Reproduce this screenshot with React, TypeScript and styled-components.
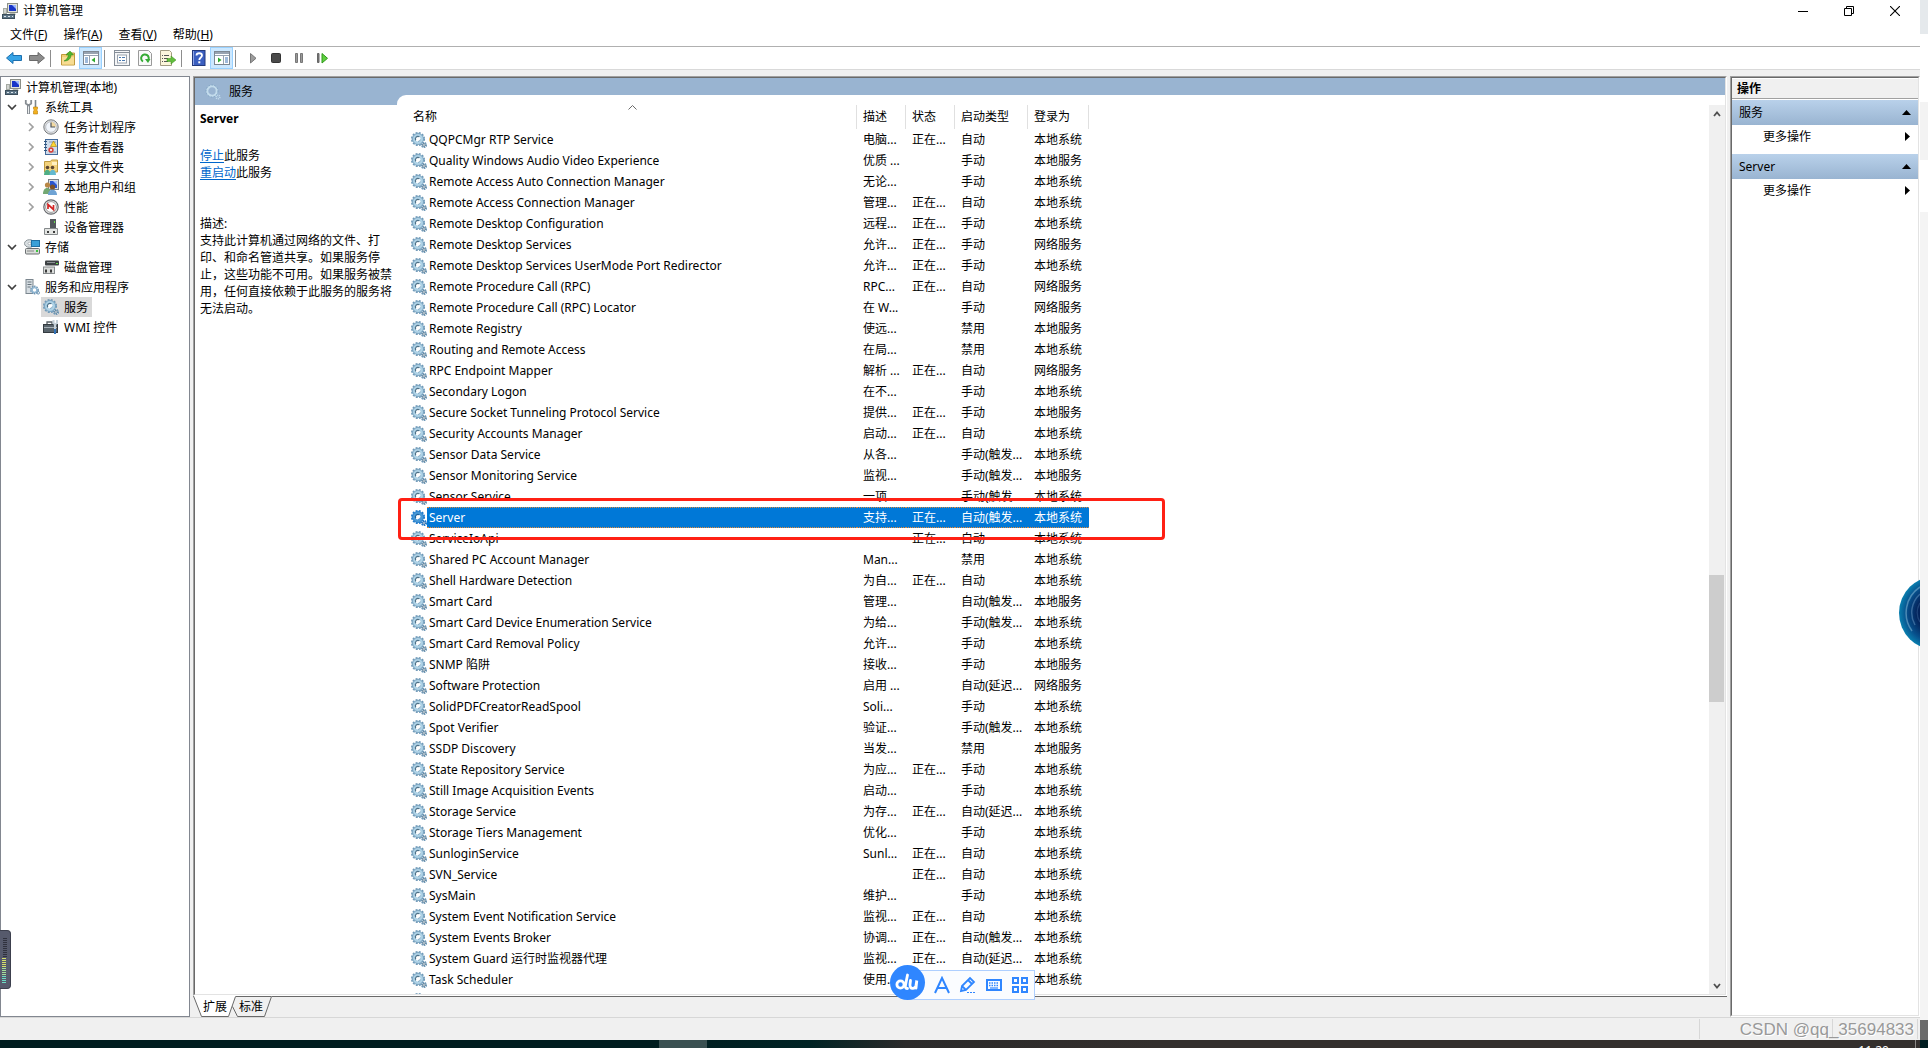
import React, { useState } from "react";
import styled, { createGlobalStyle, css } from "styled-components";

const fontStack = `"Noto Sans", "Noto Sans CJK SC", sans-serif`;

const GlobalStyle = createGlobalStyle`
  *, *::before, *::after { box-sizing: border-box; }
  html, body, #root { margin: 0; height: 100%; }
  body {
    font-family: ${fontStack};
    font-size: 12px;
    line-height: 17px;
    color: #000;
    background: #fff;
    overflow: hidden;
  }
  button {
    font: inherit;
    color: inherit;
    border: 0;
    margin: 0;
    padding: 0;
    background: none;
    text-align: left;
    white-space: nowrap;
  }
  ul { list-style: none; margin: 0; padding: 0; }
  p, h1, h2 { margin: 0; font-size: 12px; font-weight: 400; }
  svg { display: block; flex: none; }
`;

/* ---------- icons ---------- */

type IconName =
  | "computer" | "tools" | "clock" | "event" | "share" | "users" | "perf" | "device"
  | "storage" | "disk" | "server" | "gears" | "wmi"
  | "back" | "forward" | "folderUp" | "paneLeft" | "props" | "refresh" | "export"
  | "help" | "paneRight" | "play" | "stop" | "pause" | "step";

const Gears = ({ tone = "#6f99b8", fill = "#aed2e6", dark = "#4d7088" }) => (
  <>
    <circle cx="7" cy="7" r="6.1" fill="none" stroke={tone} strokeWidth="1.9" strokeDasharray="1.9 1.3" />
    <circle cx="7" cy="7" r="4.1" fill="#fff" stroke={fill} strokeWidth="3.2" />
    <circle cx="7" cy="7" r="5.5" fill="none" stroke={tone} strokeWidth="0.8" />
    <path d="M4.8 8.4A2.6 2.6 0 0 1 8.4 4.8" fill="none" stroke={dark} strokeWidth="1.2" />
    <path d="M9.4 7.4A2.5 2.5 0 0 1 7 9.500" fill="none" stroke={tone} strokeWidth="0.8" />
    <circle cx="13" cy="13" r="2.2" fill="#fff" stroke={tone} strokeWidth="1.8" strokeDasharray="1.4 0.6" />
    <circle cx="13" cy="13" r="1.3" fill="none" stroke={dark} strokeWidth="0.8" />
  </>
);

const Pane = ({ flip = false }) => (
  <g transform={flip ? "translate(16 0) scale(-1 1)" : undefined}>
    <rect x="0.5" y="1.5" width="15" height="13" fill="#fff" stroke="#7d8792" />
    <rect x="1" y="2" width="14" height="2" fill="#98a3b1" />
    <path d="M1 5.5h14M6.5 6v8" stroke="#98a3b1" />
    <path d="M2 8h3M2 10h3M2 12h3" stroke="#3f74b5" />
    <path d="M12 7.5v5L8.5 10z" fill="#2eaa2e" />
  </g>
);

const drawings: Record<IconName, React.ReactNode> = {
  computer: (
    <>
      <rect x="5.5" y="0.5" width="10" height="9" fill="#e0e3dc" stroke="#8b8f88" />
      <rect x="7" y="2" width="7" height="6" fill="#1835c8" />
      <path d="M10 2h4v4z" fill="#9ab6ff" />
      <path d="M8 10h5l1 2H7z" fill="#b8bcb4" />
      <rect x="1" y="5" width="4" height="6" fill="#a5aaa3" />
      <path d="M2 7h2M2 9h2" stroke="#fff" />
      <rect x="0.5" y="11.5" width="12" height="4" fill="#5e7688" stroke="#3c4e5b" />
      <path d="M2 13.5h2M6 13.5h2M10 13.5h1" stroke="#dce6ec" />
    </>
  ),
  tools: (
    <>
      <path d="M4.5 6v9" stroke="#878d93" strokeWidth="3" />
      <path d="M4.5 6v8.5" stroke="#eceff0" />
      <path d="M1.8 1v3.5l2.7 2 2.700-2V1" fill="none" stroke="#878d93" strokeWidth="1.800" />
      <path d="M11.5 1v7" stroke="#7d858b" strokeWidth="1.6" />
      <path d="M9.5 8h4v2l-1 1 1 1v3h-4v-3l1-1-1-1z" fill="#f2b01e" stroke="#b87d08" strokeWidth="0.6" />
    </>
  ),
  clock: (
    <>
      <circle cx="8" cy="8" r="7.2" fill="#dedede" stroke="#777b80" />
      <circle cx="8" cy="8" r="5.3" fill="#f1f5fb" stroke="#aab0b8" strokeWidth="0.7" />
      <path d="M8 8V3a5 5 0 0 1 5 5z" fill="#f2d9a2" />
      <path d="M8 3.5V8h4" fill="none" stroke="#4b535c" strokeWidth="1.2" />
    </>
  ),
  event: (
    <>
      <rect x="2.5" y="0.5" width="12" height="15" fill="#cfdceb" stroke="#436a9b" />
      <path d="M1 2.5h3M1 5.5h3M1 8.5h3M1 11.5h3" stroke="#31577f" />
      <path d="M6 3h7M6 13h7" stroke="#8397b0" />
      <path d="M10.5 2l3 5.5h-6z" fill="#ffd633" stroke="#a78200" strokeWidth="0.6" />
      <circle cx="8" cy="11" r="2.7" fill="#d8433c" />
      <path d="M7 10l2 2M9 10l-2 2" stroke="#fff" strokeWidth="0.8" />
    </>
  ),
  share: (
    <>
      <path d="M1.5 2.5h6l1-1.500h6v12h-13z" fill="#f3d27c" stroke="#bf9a40" />
      <path d="M9 3h5v3H9z" fill="#fff0c2" />
      <circle cx="4.5" cy="8.5" r="1.8" fill="#5d4630" />
      <circle cx="9.500" cy="8.5" r="1.8" fill="#5d4630" />
      <path d="M1 16c0-7 6.500-7 6.500 0z" fill="#4fae84" />
      <path d="M6.500 16c0-7 6.500-7 6.500 0z" fill="#63b9cf" />
    </>
  ),
  users: (
    <>
      <rect x="5.5" y="0.5" width="10" height="10" fill="#dbe0e4" stroke="#7a8087" />
      <rect x="7" y="2" width="7" height="7" fill="#2a55cf" />
      <path d="M10 2h4v4z" fill="#a9c3ff" />
      <circle cx="4.5" cy="6" r="2.6" fill="#b98746" />
      <circle cx="9.5" cy="8" r="2.6" fill="#7d5228" />
      <path d="M0 15c0-8 8-8 8 0z" fill="#73a873" />
      <path d="M5 16c0-7 9-7 9 0z" fill="#6fa3d4" />
    </>
  ),
  perf: (
    <>
      <circle cx="8" cy="8" r="7.2" fill="#ececec" stroke="#66696d" strokeWidth="1.2" />
      <circle cx="8" cy="8" r="5.4" fill="#fff" stroke="#777" strokeWidth="0.7" />
      <path d="M5 10V5.500l5.500 5V6" fill="none" stroke="#d32626" strokeWidth="1.7" />
    </>
  ),
  device: (
    <>
      <rect x="7" y="0" width="6" height="9" fill="#53585c" />
      <path d="M11.5 2v2" stroke="#69de4e" />
      <path d="M1.5 9.5h13v6h-13z" fill="#e4e6e4" stroke="#85898b" />
      <rect x="4" y="12" width="2" height="2" fill="#3b3b3b" />
      <rect x="10" y="12" width="2" height="2" fill="#3b3b3b" />
    </>
  ),
  storage: (
    <>
      <ellipse cx="5.5" cy="4.5" rx="5" ry="3.8" fill="#d9dfe2" stroke="#8b9499" />
      <ellipse cx="5.5" cy="4.5" rx="1.5" ry="1.2" fill="#fff" stroke="#8b9499" strokeWidth="0.6" />
      <rect x="7.5" y="1.5" width="8" height="6" fill="#3aa0d8" stroke="#1f6fa2" />
      <rect x="1.5" y="9.5" width="14" height="5.5" rx="1" fill="#d9dcd9" stroke="#6c7073" />
      <path d="M3 12h7" stroke="#888" />
      <rect x="12" y="11" width="2" height="2" fill="#3fc33f" />
    </>
  ),
  disk: (
    <>
      <rect x="2" y="1.5" width="14" height="5" rx="1" fill="#3d4144" />
      <path d="M4 3.5h8" stroke="#8c9195" />
      <rect x="13" y="4" width="2" height="1" fill="#69de4e" />
      <rect x="0.5" y="8" width="11" height="6.5" fill="#dadcda" stroke="#85898b" />
      <rect x="2" y="10.5" width="2" height="3" fill="#3b3b3b" />
      <rect x="7" y="10.5" width="2" height="3" fill="#3b3b3b" />
    </>
  ),
  server: (
    <>
      <rect x="2" y="0.5" width="7" height="14" fill="#d6dde2" stroke="#7b868e" />
      <path d="M3.5 3h4M3.5 5.5h4M3.5 8h3" stroke="#68747d" />
      <circle cx="10.5" cy="11" r="3.6" fill="none" stroke="#6d95b4" strokeWidth="1.6" strokeDasharray="1.5 0.8" />
      <circle cx="10.5" cy="11" r="2.4" fill="#fff" stroke="#8fb6d2" strokeWidth="1.4" />
      <circle cx="14.2" cy="13.8" r="1.3" fill="none" stroke="#6d95b4" />
    </>
  ),
  gears: <Gears />,
  wmi: (
    <>
      <path d="M4 5V3h5v2" fill="none" stroke="#555d63" strokeWidth="1.3" />
      <rect x="0.5" y="5.5" width="14" height="8" fill="#59646c" stroke="#343b40" />
      <path d="M1 8.5h13" stroke="#a7b1b8" />
      <path d="M10.5 1v3l1.500 1.500L14 4V1M12 6v9" fill="none" stroke="#c4d0d8" strokeWidth="2" />
      <path d="M12 10v5" stroke="#3473b7" strokeWidth="2" />
    </>
  ),
  back: <path d="M0.5 8L7 2.5v3h8.5v5H7v3z" fill="#36a3e6" stroke="#1c6fae" strokeLinejoin="round" />,
  forward: <path d="M15.5 8L9 2.5v3H0.5v5H9v3z" fill="#8d8d8d" stroke="#6a6a6a" strokeLinejoin="round" />,
  folderUp: (
    <>
      <path d="M1.5 4.5h5l1-1.500h7v12h-13z" fill="#f0cd72" stroke="#c09a3c" />
      <path d="M2 7h12v7.5H2z" fill="#f7dc92" />
      <path d="M4 11c2-1 4-3 4.500-6H6l4-4 3.500 4H11c0 4-3 6-7 6z" fill="#4fb52f" stroke="#2e8518" strokeWidth="0.5" />
    </>
  ),
  paneLeft: <Pane />,
  paneRight: <Pane flip />,
  props: (
    <>
      <rect x="0.5" y="0.5" width="15" height="15" fill="#f5f6f8" stroke="#868e98" />
      <path d="M1 2.5h14" stroke="#868e98" />
      <rect x="3.5" y="5" width="9" height="8" fill="#fff" stroke="#9aa3ae" />
      <path d="M5 7.5h2M8 7.5h3M5 10.5h2M8 10.5h3" stroke="#4a7ab0" />
    </>
  ),
  refresh: (
    <>
      <path d="M1.5 0.5h10l3 3v12h-13z" fill="#fafafa" stroke="#9a9a9a" />
      <path d="M6 11.5A3.8 3.8 0 1 1 11 10.5" fill="none" stroke="#35ab35" strokeWidth="2" />
      <path d="M8 9h5.5L11 13z" fill="#35ab35" />
    </>
  ),
  export: (
    <>
      <path d="M0.5 0.5h9l2 2v13h-11z" fill="#fdf6dc" stroke="#a39c83" />
      <path d="M2 5.5h1M4 5.5h5M2 8.5h1M4 8.5h4M2 11.5h1M4 11.5h4" stroke="#555" />
      <path d="M7 8.5h4V6l5 4-5 4v-2.500H7z" fill="#62bd3d" stroke="#3a8f1d" strokeWidth="0.5" />
    </>
  ),
  help: (
    <>
      <rect x="1.5" y="0.5" width="12.5" height="15" fill="#3b5fc0" stroke="#23397c" />
      <path d="M2.5 1v14" stroke="#8ea5e6" />
      <path d="M5.5 5.5c0-3 5.500-3 5.500 0 0 2-2.700 2-2.700 4.500" fill="none" stroke="#fff" strokeWidth="1.8" />
      <rect x="7.3" y="11.3" width="2" height="2" fill="#fff" />
    </>
  ),
  play: <path d="M5.5 3.5V13l5.500-4.700z" fill="#9c9c9c" stroke="#777" />,
  stop: <rect x="3.5" y="3.5" width="9" height="9" rx="1" fill="#4a4a4a" stroke="#333" />,
  pause: <path d="M4.5 3.5h2v9h-2zM9.5 3.5h2v9h-2z" fill="#9a9a9a" stroke="#777" />,
  step: (
    <>
      <path d="M3.5 3.5H5v9H3.500z" fill="#777" stroke="#666" />
      <path d="M8 3.5V13l5.500-4.700z" fill="#5fcf3f" stroke="#2f9a1a" />
    </>
  ),
};

const Icon = ({ name }: { name: IconName }) => (
  <svg width="16" height="16" viewBox="0 0 16 16" aria-hidden="true">{drawings[name]}</svg>
);

const ServiceIcon = ({ active }: { active: boolean }) => (
  <svg width="16" height="16" viewBox="0 0 16 16" aria-hidden="true">
    {active ? <Gears tone="#1f7acb" fill="#4a9ad6" dark="#1b5f9e" /> : <Gears />}
  </svg>
);

const Chevron = ({ open = false }) => (
  <svg width="10" height="10" viewBox="0 0 10 10" aria-hidden="true">
    <path
      d={open ? "M1 3l4 4 4-4" : "M3 1l4 4-4 4"}
      fill="none"
      stroke={open ? "#404040" : "#a0a0a0"}
      strokeWidth="1.7"
    />
  </svg>
);

/* ---------- desktop frame ---------- */

const Screen = styled.div`
  position: relative;
  display: grid;
  grid-template-columns: minmax(0, 1fr) 8px;
  grid-template-rows: minmax(0, 1fr) 8px;
  height: 100vh;
  overflow: hidden;
`;

const Window = styled.div`
  display: flex;
  flex-direction: column;
  min-height: 0;
  background: #f0f0f0;
`;

const DesktopStrip = styled.div`
  display: flex;
  flex-direction: column;
`;

const StripBlock = styled.div<{ $h?: number; $tone: string }>`
  flex: ${(p) => (p.$h ? `0 0 ${p.$h}px` : "1")};
  background: ${(p) => p.$tone};
`;

const TitleBar = styled.header`
  display: flex;
  justify-content: space-between;
  height: 23px;
  background: #fff;
`;

const AppTitle = styled.h1`
  display: flex;
  align-items: center;
  gap: 5px;
  padding: 0 0 2px 2px;
`;

const WindowButtons = styled.div`
  display: flex;
  height: 21px;
  padding-right: 2px;
`;

const WindowButton = styled.button`
  display: flex;
  align-items: center;
  justify-content: center;
  width: 46px;
`;

const MenuBar = styled.nav`
  display: flex;
  height: 24px;
  padding-left: 2px;
  background: #fff;
  border-bottom: 1px solid #b0b0b0;
`;

const MenuButton = styled.button`
  padding: 0 8px;
`;

const Toolbar = styled.div`
  display: flex;
  height: 23px;
  padding-left: 2px;
  background: #fff;
  border-bottom: 1px solid #d9d9d9;
`;

const ToolButton = styled.button<{ $on?: boolean }>`
  display: flex;
  align-items: center;
  justify-content: center;
  width: 23px;
  ${(p) => p.$on && css`
    background: #cce8ff;
    border: 1px solid #99d1ff;
  `}
`;

const ToolDivider = styled.span`
  width: 1px;
  margin: 3px 5px 2px 2px;
  background: #8d8d8d;
`;

const Workspace = styled.main`
  display: grid;
  grid-template-columns: 190px minmax(0, 1fr) 190px;
  gap: 3px;
  flex: 1;
  min-height: 0;
  padding-top: 6px;
`;

/* ---------- tree ---------- */

const TreePane = styled.nav`
  background: #fff;
  border: 1px solid #828790;
`;

const TreeRow = styled.div<{ $depth: number }>`
  display: flex;
  height: 20px;
  padding-left: ${(p) => [2, 3, 22][p.$depth]}px;
`;

const Twisty = styled.button`
  display: flex;
  align-items: center;
  justify-content: center;
  width: 18px;
  padding-right: 2px;
`;

const TreeLabel = styled.button<{ $selected?: boolean }>`
  display: flex;
  align-items: center;
  gap: 5px;
  padding: 0 4px 0 2px;
  background: ${(p) => (p.$selected ? "#d9d9d9" : "none")};
`;

/* ---------- centre ---------- */

const CentrePane = styled.section`
  display: flex;
  flex-direction: column;
  min-width: 0;
  min-height: 0;
`;

const Bezel = styled.div`
  display: flex;
  flex: 1;
  min-height: 0;
  border: 1px solid;
  border-color: #a0a0a0 #fff #fff #a0a0a0;
`;

const BezelInner = styled.div<{ $column?: boolean }>`
  display: flex;
  flex: 1;
  flex-direction: ${(p) => (p.$column ? "column" : "row")};
  min-width: 0;
  background: ${(p) => (p.$column ? "#fff" : "#99b4d1")};
  border: 1px solid;
  border-color: #696969 #e3e3e3 #e3e3e3 #696969;
`;

const DetailColumn = styled.div`
  display: flex;
  flex-direction: column;
  width: 202px;
`;

const PaneTitle = styled.h2`
  display: flex;
  align-items: center;
  gap: 8px;
  height: 27px;
  padding-left: 10px;
`;

const Detail = styled.div`
  flex: 1;
  padding: 5px 2px 0 5px;
  background: #fff;
`;

const DetailName = styled.p`
  font-weight: 700;
`;

const DetailBlock = styled.div<{ $space: number }>`
  margin-top: ${(p) => p.$space}px;
`;

const ActionLink = styled.a`
  color: #0066cc;
  text-decoration: underline;
  text-underline-offset: 2px;
`;

const ListCard = styled.div`
  display: flex;
  flex: 1;
  min-width: 0;
  margin-top: 17px;
  padding-top: 10px;
  background: #fff;
  border-top-left-radius: 9px;
`;

const ListViewport = styled.div`
  flex: 1;
  min-width: 0;
  overflow: hidden;
  padding-left: 11px;
`;

const ServiceTable = styled.table`
  width: 681px;
  table-layout: fixed;
  border-collapse: separate;
  border-spacing: 0;
`;

const Column = styled.col<{ $w: number }>`
  width: ${(p) => p.$w}px;
`;

const HeadCell = styled.th`
  position: relative;
  height: 24px;
  padding: 0 0 2px 6px;
  border-right: 1px solid #e0e0e0;
  font-weight: 400;
  text-align: left;
  white-space: nowrap;
  &:first-child { padding-left: 5px; }
`;

const SortMark = styled.svg`
  position: absolute;
  top: 0;
  left: calc(50% - 4px);
`;

const BodyCell = styled.td`
  height: 21px;
  padding: 0;
  white-space: nowrap;
`;

const CellText = styled.div<{ $selected: boolean }>`
  flex: 1;
  height: 21px;
  padding-left: 6px;
  line-height: 19px;
  border: solid transparent;
  border-width: 1px 0;
  overflow: hidden;
  ${(p) => p.$selected && css`
    color: #fff;
    background: #0078d7;
    border: dotted #e08a3c;
    border-width: 1px 0;
  `}
`;

const NameCell = styled.div`
  display: flex;
  align-items: center;
  padding-left: 3px;
  ${CellText} { padding-left: 2px; }
`;

const ScrollTrack = styled.div`
  display: flex;
  flex-direction: column;
  width: 16px;
  padding-right: 1px;
  background: #f0f0f0;
`;

const ScrollArrow = styled.button`
  display: flex;
  align-items: center;
  justify-content: center;
  height: 17px;
`;

const ScrollPart = styled.div<{ $share: number; $thumb?: boolean }>`
  flex: ${(p) => p.$share} 1 0;
  background: ${(p) => (p.$thumb ? "#cdcdcd" : "none")};
`;

const TabStrip = styled.div`
  display: flex;
  height: 21px;
`;

const Tab = styled.button<{ $active: boolean; $w: number }>`
  position: relative;
  width: ${(p) => p.$w}px;
  padding-left: ${(p) => (p.$active ? 10 : 5)}px;
  z-index: ${(p) => (p.$active ? 1 : 0)};
  svg { position: absolute; top: 0; left: 0; z-index: -1; overflow: visible; }
`;

const TabFill = styled.span`
  flex: 1;
  border-top: 1px solid #696969;
`;

/* ---------- actions ---------- */

const ActionsHeading = styled.h2`
  height: 21px;
  margin-bottom: 1px;
  padding: 1px 0 0 5px;
  font-weight: 700;
  background: #f0f0f0;
  border-top: 1px solid #fff;
  border-bottom: 1px solid #a0a0a0;
`;

const ActionGroup = styled.section`
  padding-bottom: 6px;
`;

const GroupHeader = styled.button`
  display: flex;
  align-items: center;
  justify-content: space-between;
  width: 100%;
  height: 25px;
  padding: 0 7px;
  background: linear-gradient(#b9d1ea, #99b4d1);
`;

const ActionItem = styled.button`
  display: flex;
  align-items: center;
  justify-content: space-between;
  width: 100%;
  height: 23px;
  padding: 0 8px 0 31px;
`;

/* ---------- bottom ---------- */

const StatusBar = styled.footer`
  display: flex;
  justify-content: flex-end;
  height: 23px;
  padding-top: 1px;
  border-top: 1px solid #d7d7d7;
`;

const StatusCell = styled.div<{ $w: number }>`
  width: ${(p) => p.$w}px;
  margin-bottom: 1px;
  border-left: 1px solid #d7d7d7;
`;

const Watermark = styled.span`
  position: absolute;
  right: 14px;
  bottom: 8px;
  font: 17px/20px "Liberation Sans", sans-serif;
  color: #999;
  text-shadow: 1px 1px 0 #fff;
`;

const Taskbar = styled.div`
  position: relative;
  display: flex;
  grid-column: 1 / -1;
  overflow: hidden;
  background: linear-gradient(90deg, #001d1f 0 34%, #002324 42%, #2b2a2a 47%, #332f2d 60%);
`;

const TaskButton = styled.button`
  width: 48px;
  margin-left: 659px;
  background: #3a5051;
`;

const Clock = styled.time`
  margin-left: auto;
  padding: 2px 26px 0 0;
  color: #fff;
  border-right: 1px solid #8b8886;
`;

const TaskEnd = styled.span`
  width: 12px;
  border-right: 8px solid #001d20;
`;

/* ---------- overlays ---------- */

const Highlight = styled.div`
  position: absolute;
  left: 398px;
  top: 498px;
  width: 767px;
  height: 42px;
  border: 3px solid #ff2014;
  border-radius: 4px;
  pointer-events: none;
`;

const InputBar = styled.div`
  position: absolute;
  left: 890px;
  top: 965px;
  display: flex;
  align-items: center;
`;

const InputLogo = styled.button`
  z-index: 1;
  width: 35px;
  height: 35px;
  border-radius: 50%;
  background: #2f86ff;
`;

const InputTools = styled.div`
  display: flex;
  align-items: center;
  gap: 8px;
  height: 30px;
  margin: 5px 0 0 -18px;
  padding: 0 5px 0 25px;
  background: #fafcff;
  border: 1px solid #aecfff;
`;

const InputTool = styled.button`
  width: 18px;
  height: 18px;
`;

const Meter = styled.div`
  position: absolute;
  left: 0;
  top: 930px;
  width: 11px;
  height: 59px;
  padding: 7px 0 0 2px;
  background: #565a6c;
  border: 1px solid #3c3f4d;
  border-left: 0;
  border-radius: 0 4px 4px 0;
`;

const Ball = styled.div`
  position: absolute;
  right: 8px;
  top: 578px;
  width: 22px;
  height: 70px;
`;

/* ---------- data ---------- */

type Node = { label: string; icon: IconName; depth: number; open?: boolean };

const tree: Node[] = [
  { label: "计算机管理(本地)", icon: "computer", depth: 0 },
  { label: "系统工具", icon: "tools", depth: 1, open: true },
  { label: "任务计划程序", icon: "clock", depth: 2, open: false },
  { label: "事件查看器", icon: "event", depth: 2, open: false },
  { label: "共享文件夹", icon: "share", depth: 2, open: false },
  { label: "本地用户和组", icon: "users", depth: 2, open: false },
  { label: "性能", icon: "perf", depth: 2, open: false },
  { label: "设备管理器", icon: "device", depth: 2 },
  { label: "存储", icon: "storage", depth: 1, open: true },
  { label: "磁盘管理", icon: "disk", depth: 2 },
  { label: "服务和应用程序", icon: "server", depth: 1, open: true },
  { label: "服务", icon: "gears", depth: 2 },
  { label: "WMI 控件", icon: "wmi", depth: 2 },
];

const RUN = "正在...";
const SYS = "本地系统";
const LOC = "本地服务";
const NET = "网络服务";
const TRIG = "手动(触发...";
const ATRIG = "自动(触发...";
const DELAY = "自动(延迟...";

const services: string[][] = [
  ["QQPCMgr RTP Service", "电脑...", RUN, "自动", SYS],
  ["Quality Windows Audio Video Experience", "优质 ...", "", "手动", LOC],
  ["Remote Access Auto Connection Manager", "无论...", "", "手动", SYS],
  ["Remote Access Connection Manager", "管理...", RUN, "自动", SYS],
  ["Remote Desktop Configuration", "远程...", RUN, "手动", SYS],
  ["Remote Desktop Services", "允许...", RUN, "手动", NET],
  ["Remote Desktop Services UserMode Port Redirector", "允许...", RUN, "手动", SYS],
  ["Remote Procedure Call (RPC)", "RPC...", RUN, "自动", NET],
  ["Remote Procedure Call (RPC) Locator", "在 W...", "", "手动", NET],
  ["Remote Registry", "使远...", "", "禁用", LOC],
  ["Routing and Remote Access", "在局...", "", "禁用", SYS],
  ["RPC Endpoint Mapper", "解析 ...", RUN, "自动", NET],
  ["Secondary Logon", "在不...", "", "手动", SYS],
  ["Secure Socket Tunneling Protocol Service", "提供...", RUN, "手动", LOC],
  ["Security Accounts Manager", "启动...", RUN, "自动", SYS],
  ["Sensor Data Service", "从各...", "", TRIG, SYS],
  ["Sensor Monitoring Service", "监视...", "", TRIG, LOC],
  ["Sensor Service", "一项...", "", TRIG, SYS],
  ["Server", "支持...", RUN, ATRIG, SYS],
  ["ServiceIoApi", "", RUN, "自动", SYS],
  ["Shared PC Account Manager", "Man...", "", "禁用", SYS],
  ["Shell Hardware Detection", "为自...", RUN, "自动", SYS],
  ["Smart Card", "管理...", "", ATRIG, LOC],
  ["Smart Card Device Enumeration Service", "为给...", "", TRIG, SYS],
  ["Smart Card Removal Policy", "允许...", "", "手动", SYS],
  ["SNMP 陷阱", "接收...", "", "手动", LOC],
  ["Software Protection", "启用 ...", "", DELAY, NET],
  ["SolidPDFCreatorReadSpool", "Soli...", "", "手动", SYS],
  ["Spot Verifier", "验证...", "", TRIG, SYS],
  ["SSDP Discovery", "当发...", "", "禁用", LOC],
  ["State Repository Service", "为应...", RUN, "手动", SYS],
  ["Still Image Acquisition Events", "启动...", "", "手动", SYS],
  ["Storage Service", "为存...", RUN, DELAY, SYS],
  ["Storage Tiers Management", "优化...", "", "手动", SYS],
  ["SunloginService", "Sunl...", RUN, "自动", SYS],
  ["SVN_Service", "", RUN, "自动", SYS],
  ["SysMain", "维护...", "", "手动", SYS],
  ["System Event Notification Service", "监视...", RUN, "自动", SYS],
  ["System Events Broker", "协调...", RUN, ATRIG, SYS],
  ["System Guard 运行时监视器代理", "监视...", RUN, DELAY, SYS],
  ["Task Scheduler", "使用...", RUN, "自动", SYS],
  ["", "", "", "", ""],
];

const menus = [["文件", "F"], ["操作", "A"], ["查看", "V"], ["帮助", "H"]];

const tools: { icon?: IconName; label?: string; on?: boolean }[] = [
  { icon: "back", label: "后退" },
  { icon: "forward", label: "前进" },
  {},
  { icon: "folderUp", label: "向上一级" },
  { icon: "paneLeft", label: "显示/隐藏控制台树", on: true },
  {},
  { icon: "props", label: "属性" },
  { icon: "refresh", label: "刷新" },
  { icon: "export", label: "导出列表" },
  {},
  { icon: "help", label: "帮助" },
  { icon: "paneRight", label: "显示/隐藏操作窗格", on: true },
  {},
  { icon: "play", label: "启动服务" },
  { icon: "stop", label: "停止服务" },
  { icon: "pause", label: "暂停服务" },
  { icon: "step", label: "重新启动服务" },
];

/* ---------- parts ---------- */

const Caption = () => (
  <WindowButtons>
    <WindowButton aria-label="最小化">
      <svg width="10" height="10" viewBox="0 0 10 10"><path d="M0 5.5h10" stroke="#000" /></svg>
    </WindowButton>
    <WindowButton aria-label="还原">
      <svg width="10" height="10" viewBox="0 0 10 10">
        <path d="M0.5 2.5h7v7h-7zM2.5 2.5v-2h7v7h-2" fill="none" stroke="#000" />
      </svg>
    </WindowButton>
    <WindowButton aria-label="关闭">
      <svg width="10" height="10" viewBox="0 0 10 10"><path d="M0 0l10 10M10 0L0 10" stroke="#000" strokeWidth="1.1" /></svg>
    </WindowButton>
  </WindowButtons>
);

const ServiceList = ({ selected, onSelect }: { selected: string; onSelect: (s: string) => void }) => (
  <ServiceTable>
    <colgroup>
      {[449, 49, 49, 73, 61].map((w, i) => <Column key={i} $w={w} />)}
    </colgroup>
    <thead>
      <tr>
        <HeadCell>
          名称
          <SortMark width="9" height="5" viewBox="0 0 9 5" aria-hidden="true">
            <path d="M0.5 4.5l4-4 4 4" fill="none" stroke="#6a6a6a" />
          </SortMark>
        </HeadCell>
        {["描述", "状态", "启动类型", "登录为"].map((h) => <HeadCell key={h}>{h}</HeadCell>)}
      </tr>
    </thead>
    <tbody>
      {services.map(([name, ...rest], r) => {
        const active = name === selected;
        return (
          <tr key={r} onClick={() => name && onSelect(name)}>
            <BodyCell>
              <NameCell>
                <ServiceIcon active={active} />
                <CellText $selected={active}>{name}</CellText>
              </NameCell>
            </BodyCell>
            {rest.map((text, i) => (
              <BodyCell key={i}><CellText $selected={active}>{text}</CellText></BodyCell>
            ))}
          </tr>
        );
      })}
    </tbody>
  </ServiceTable>
);

const ScrollBar = () => (
  <ScrollTrack>
    <ScrollArrow aria-label="向上滚动">
      <svg width="8" height="6" viewBox="0 0 8 6"><path d="M1 5l3-3.500L7 5" fill="none" stroke="#505050" strokeWidth="1.8" /></svg>
    </ScrollArrow>
    <ScrollPart $share={454} />
    <ScrollPart $share={127} $thumb />
    <ScrollPart $share={275} />
    <ScrollArrow aria-label="向下滚动">
      <svg width="8" height="6" viewBox="0 0 8 6"><path d="M1 1l3 3.500L7 1" fill="none" stroke="#505050" strokeWidth="1.8" /></svg>
    </ScrollArrow>
  </ScrollTrack>
);

const InputMethodBar = () => (
  <InputBar>
    <InputLogo aria-label="输入法">
      <svg width="35" height="35" viewBox="0 0 35 35">
        <g fill="none" stroke="#fff" strokeWidth="2.8" strokeLinecap="round">
          <circle cx="10.5" cy="19.5" r="3.6" />
          <path d="M17.5 10l-2 10c-.5 3 .5 3.500 2 3.500" />
          <path d="M20.5 15.5l-.5 4c-.5 5 5 5 6 1l.8-5-.8 7.500" />
        </g>
      </svg>
    </InputLogo>
    <InputTools>
      <InputTool aria-label="中英文切换">
        <svg width="18" height="18" viewBox="0 0 18 18"><path d="M2 17L9 2l7 15M5 12h8" fill="none" stroke="#2f86ff" strokeWidth="2" /></svg>
      </InputTool>
      <InputTool aria-label="手写">
        <svg width="18" height="18" viewBox="0 0 18 18">
          <path d="M2 15l1-5 8-8 4 4-8 8zM9 4l4 4M3 10l4 4" fill="none" stroke="#2f86ff" strokeWidth="1.8" />
          <path d="M8 16.5h2M11 16.5h2M14 16.5h2" stroke="#2f86ff" />
        </svg>
      </InputTool>
      <InputTool aria-label="软键盘">
        <svg width="18" height="18" viewBox="0 0 18 18">
          <rect x="2" y="4" width="14" height="10" fill="none" stroke="#2f86ff" strokeWidth="2" />
          <path d="M4 7h10M4 9.500h10" stroke="#2f86ff" strokeWidth="1.5" strokeDasharray="1.5 1" />
          <path d="M5 12h8" stroke="#2f86ff" strokeWidth="1.2" />
        </svg>
      </InputTool>
      <InputTool aria-label="工具箱">
        <svg width="18" height="18" viewBox="0 0 18 18">
          <path d="M2 2h5v5H2zM11 2h5v5h-5zM2 11h5v5H2zM11 11h5v5h-5z" fill="none" stroke="#2f86ff" strokeWidth="2" />
        </svg>
      </InputTool>
    </InputTools>
  </InputBar>
);

const LevelMeter = () => (
  <Meter>
    <svg width="5" height="46" viewBox="0 0 5 46">
      {Array.from({ length: 23 }, (_, i) => (
        <rect
          key={i}
          x={i < 10 ? 1 : 0}
          y={i * 2}
          width="4"
          height="1"
          fill={i < 10 ? "#30323e" : i < 15 ? "#d6e06a" : i < 19 ? "#a4e09a" : "#6cdcc4"}
        />
      ))}
    </svg>
  </Meter>
);

const FloatingBall = () => (
  <Ball>
    <svg width="22" height="70" viewBox="0 0 22 70">
      <defs>
        <radialGradient id="ball" gradientUnits="userSpaceOnUse" cx="38" cy="35" r="38">
          <stop offset="0.5" stopColor="#04245c" />
          <stop offset="0.78" stopColor="#07508c" />
          <stop offset="1" stopColor="#0a86b4" />
        </radialGradient>
      </defs>
      <circle cx="38" cy="35" r="37" fill="url(#ball)" />
      <g fill="none" strokeWidth="1.5">
        <path d="M22 9A31 31 0 0 0 14 53" stroke="#4b8ab5" />
        <path d="M22 16A25 25 0 0 0 17 47" stroke="#37699c" />
        <path d="M22 25A18 18 0 0 0 22 44" stroke="#1d4379" />
      </g>
    </svg>
  </Ball>
);

export default function App() {
  const [node, setNode] = useState("服务");
  const [service, setService] = useState("Server");

  return (
    <>
      <GlobalStyle />
      <Screen>
        <Window>
          <TitleBar>
            <AppTitle><Icon name="computer" />计算机管理</AppTitle>
            <Caption />
          </TitleBar>
          <MenuBar>
            {menus.map(([label, key]) => (
              <MenuButton key={key}>{label}(<u>{key}</u>)</MenuButton>
            ))}
          </MenuBar>
          <Toolbar>
            {tools.map((t, i) => t.icon
              ? <ToolButton key={i} $on={t.on} aria-label={t.label}><Icon name={t.icon} /></ToolButton>
              : <ToolDivider key={i} />)}
          </Toolbar>

          <Workspace>
            <TreePane>
              <ul>
                {tree.map((n) => (
                  <li key={n.label}>
                    <TreeRow $depth={n.depth}>
                      {n.depth > 0 && (
                        <Twisty aria-label={n.label} disabled={n.open === undefined}>
                          {n.open !== undefined && <Chevron open={n.open} />}
                        </Twisty>
                      )}
                      <TreeLabel $selected={n.label === node} onClick={() => setNode(n.label)}>
                        <Icon name={n.icon} />{n.label}
                      </TreeLabel>
                    </TreeRow>
                  </li>
                ))}
              </ul>
            </TreePane>

            <CentrePane>
              <Bezel>
                <BezelInner>
                  <DetailColumn>
                    <PaneTitle>
                      <svg width="16" height="16" viewBox="0 0 16 16" aria-hidden="true">
                        <circle cx="7" cy="7" r="4.8" fill="none" stroke="#c3dcec" strokeWidth="2.2" />
                        <circle cx="7" cy="7" r="6" fill="none" stroke="#7fa3c2" strokeDasharray="1.5 1.5" />
                        <circle cx="13" cy="13" r="1.8" fill="none" stroke="#c3dcec" strokeWidth="1.6" strokeDasharray="1 0.7" />
                      </svg>
                      服务
                    </PaneTitle>
                    <Detail>
                      <DetailName>Server</DetailName>
                      <DetailBlock $space={20}>
                        <p><ActionLink href="#stop">停止</ActionLink>此服务</p>
                        <p><ActionLink href="#restart">重启动</ActionLink>此服务</p>
                      </DetailBlock>
                      <DetailBlock $space={34}>
                        <p>描述:</p>
                        <p>支持此计算机通过网络的文件、打印、和命名管道共享。如果服务停止，这些功能不可用。如果服务被禁用，任何直接依赖于此服务的服务将无法启动。</p>
                      </DetailBlock>
                    </Detail>
                  </DetailColumn>
                  <ListCard>
                    <ListViewport>
                      <ServiceList selected={service} onSelect={setService} />
                    </ListViewport>
                    <ScrollBar />
                  </ListCard>
                </BezelInner>
              </Bezel>
              <TabStrip>
                <Tab $active $w={41}>
                  <svg width="41" height="21" viewBox="0 0 41 21">
                    <path d="M0.5 0L8.5 20.5H35.5L42.5 0z" fill="#fff" />
                    <path d="M0.5 0L8.5 20.5H35.5L42.5 0.5" fill="none" stroke="#696969" />
                  </svg>
                  扩展
                </Tab>
                <Tab $active={false} $w={38}>
                  <svg width="38" height="21" viewBox="0 0 38 21">
                    <path d="M-1.5 10.5L3.5 20.5H30.5L37.5 0.5H1.5" fill="none" stroke="#696969" />
                  </svg>
                  标准
                </Tab>
                <TabFill />
              </TabStrip>
            </CentrePane>

            <Bezel as="aside">
              <BezelInner $column>
                <ActionsHeading>操作</ActionsHeading>
                {["服务", "Server"].map((g) => (
                  <ActionGroup key={g}>
                    <GroupHeader>
                      {g}
                      <svg width="9" height="5" viewBox="0 0 9 5"><path d="M0 5L4.5 0 9 5z" /></svg>
                    </GroupHeader>
                    <ActionItem>
                      更多操作
                      <svg width="5" height="9" viewBox="0 0 5 9"><path d="M0 0l5 4.500L0 9z" /></svg>
                    </ActionItem>
                  </ActionGroup>
                ))}
              </BezelInner>
            </Bezel>
          </Workspace>

          <StatusBar>
            <StatusCell $w={133} />
            <StatusCell $w={85} />
            <StatusCell $w={3} />
          </StatusBar>
        </Window>

        <DesktopStrip>
          <StripBlock $h={34} $tone="#e5e9ec" />
          <StripBlock $h={68} $tone="#ffffff" />
          <StripBlock $h={58} $tone="#f3f3f3" />
          <StripBlock $h={52} $tone="#ffffff" />
          <StripBlock $tone="#f4f4f4" />
          <StripBlock $h={20} $tone="#6b6b6b" />
        </DesktopStrip>

        <Taskbar>
          <TaskButton aria-label="任务" />
          <Clock>11:20</Clock>
          <TaskEnd />
        </Taskbar>

        <Highlight />
        <InputMethodBar />
        <LevelMeter />
        <FloatingBall />
        <Watermark>CSDN @qq_35694833</Watermark>
      </Screen>
    </>
  );
}
